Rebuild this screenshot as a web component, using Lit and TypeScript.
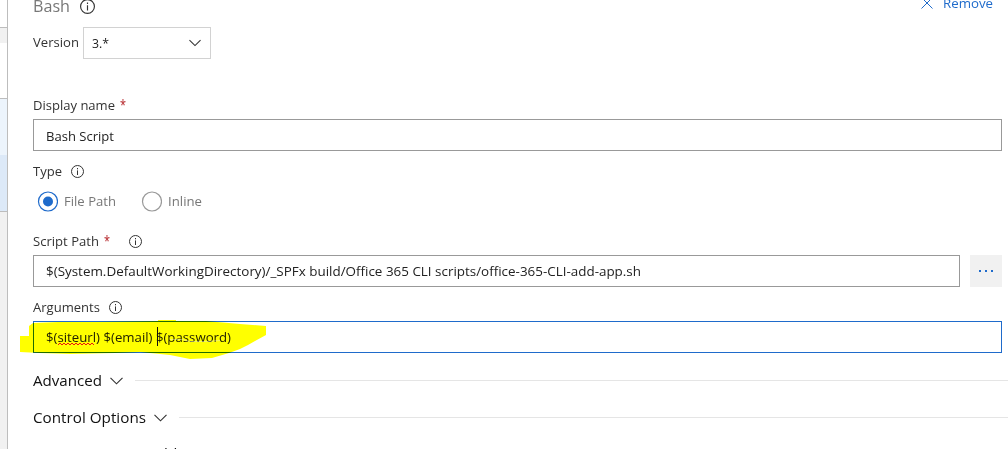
import { LitElement, html, svg, css } from "lit";
import { customElement, property } from "lit/decorators.js";

@customElement("info-icon")
class InfoIcon extends LitElement {
  @property({ type: Number }) size = 13;
  static styles = css`:host{display:block;line-height:0}`;
  render() {
    return html`<svg width=${this.size} height=${this.size} viewBox="0 0 13 13" fill="none" stroke="#333"><circle cx="6.5" cy="6.5" r="6"/><path d="M6.5 5.4V10M6.5 3V4.3"/></svg>`;
  }
}

/* A run of text fitted to a known advance width. */
@customElement("fit-text")
class FitText extends LitElement {
  @property() text = "";
  @property({ type: Number }) w = 50;
  @property({ type: Number }) size = 14;
  static styles = css`
    :host{display:block;line-height:0;flex:none}
    svg{overflow:visible;display:block}
    text{font-family:"Open Sans","Noto Sans",sans-serif;fill:currentColor}
  `;
  render() {
    return html`<svg width=${this.w} height="20">${svg`<text x="0" y="15" font-size=${this.size} textLength=${this.w} lengthAdjust="spacingAndGlyphs">${this.text}</text>`}</svg>`;
  }
}

@customElement("app-root")
class AppRoot extends LitElement {
  static styles = css`
    :host{display:flex;width:1008px;height:449px;overflow:hidden;background:#fff;color:#333;font-family:"Open Sans","Noto Sans",sans-serif;position:relative}
    *{box-sizing:border-box}
    .side{width:8px;height:449px;border-right:1px solid #bdbdbd;display:flex;flex-direction:column;flex:none;background:#f1f1f1}
    .s1{height:27px;background:#fff}
    .s2{height:16px;background:#f1f1f1;border-top:1px solid #bdbdbd}
    .s3{height:55px;background:#fff}
    .s4{height:57px;background:#ecf4fc;border-top:1px solid #bdbdbd}
    .s5{height:57px;background:#dce9f8;border-bottom:1px solid #bdbdbd}
    .main{flex:1;padding-left:25px;display:flex;flex-direction:column;min-width:0}
    .row{display:flex;align-items:center;flex:none}
    .top{height:27px;align-items:flex-start}
    .title{color:#777;margin-top:-3px}
    .top info-icon{margin:-1px 0 0 10px}
    .remove{margin:-7px 15px 0 auto;display:flex;color:#1f6bcb}
    .remove .x{margin:5px 10px 0 0}
    .version{height:32px;gap:4px}
    .version > fit-text{margin-top:-2px}
    .select{width:128px;height:32px;border:1px solid #d2d2d2;padding:0 9px 0 8px;display:flex;align-items:center;justify-content:space-between;color:#222}
    .label{height:20px}
    .dn{margin:36px 0 4px}
    .req{color:#b32025;margin-left:5px}
    .box{height:32px;border:1px solid #999;width:969px;padding-left:12px;display:flex;align-items:center;color:#222;flex:none}
    .name{padding-top:1px}
    .type{margin-top:10px}
    .type info-icon,.args info-icon{margin-left:9px}
    .radios{height:22px;margin-top:9px;padding-left:4px;color:#777}
    .radios svg{margin-right:6px;flex:none}
    .radios .second{margin-left:25px}
    .sp{margin:19px 0 4px}
    .sp info-icon{margin-left:19px}
    .path{gap:10px}
    .path .box{width:927px}
    .more{width:32px;height:32px;background:#f1f1f1;display:flex;align-items:center;justify-content:center;gap:4px}
    .more i{width:2px;height:2px;background:#1f6bcb}
    .args{margin:10px 0 4px}
    .focus{border-color:#1f6bcb}
    .section{height:37px;color:#111}
    .first{margin-top:9px}
    .last{margin-top:-1px}
    .section svg{margin-left:8px;flex:none}
    .section hr{flex:1;border:0;height:1px;background:#e5e5e5;margin:0 0 0 12px}
    .marker{position:absolute;left:0;top:305px;mix-blend-mode:multiply;pointer-events:none}
    .gap{position:absolute;left:170px;top:339px}
    .squiggle{position:absolute;left:58px;top:342px}
    .caret{position:absolute;left:157px;top:327px;width:1px;height:19px;background:#111}
  `;
  chevron(w = 13) {
    return html`<svg width=${w} height="8" viewBox="0 0 13 8" fill="none" stroke="#333" stroke-width="1.15"><path d="M.5 .8L6.5 6.8L12.5 .8"/></svg>`;
  }
  render() {
    return html`
      <div class="side"><div class="s1"></div><div class="s2"></div><div class="s3"></div><div class="s4"></div><div class="s5"></div></div>
      <div class="main">
        <div class="row top">
          <fit-text class="title" text="Bash" .w=${37} .size=${17}></fit-text>
          <info-icon .size=${15}></info-icon>
          <div class="remove"><svg class="x" width="12" height="12" fill="none" stroke="currentColor"><path d="M.5 -.5L11.5 10.5M11.5 -.5L.5 10.5"/></svg><fit-text text="Remove" .w=${50} .size=${13.5}></fit-text></div>
        </div>
        <div class="row version"><fit-text text="Version" .w=${46} .size=${13.5}></fit-text>
          <div class="select"><fit-text text="3.*" .w=${17} .size=${13.5}></fit-text>${this.chevron(12)}</div></div>
        <div class="row label dn"><fit-text text="Display name" .w=${82} .size=${13.5}></fit-text><fit-text class="req" text="*" .w=${6}></fit-text></div>
        <div class="box name"><fit-text text="Bash Script" .w=${68} .size=${13.5}></fit-text></div>
        <div class="row label type"><fit-text text="Type" .w=${29} .size=${13.5}></fit-text><info-icon></info-icon></div>
        <div class="row radios">
          <svg width="21" height="21" fill="none" stroke="#1f6bcb" stroke-width="1.2"><circle cx="11" cy="10.5" r="9.5"/><circle cx="11" cy="10.5" r="5" fill="#1f6bcb" stroke="none"/></svg><fit-text text="File Path" .w=${52} .size=${13.5}></fit-text>
          <svg class="second" width="21" height="21" fill="none" stroke="#999" stroke-width="1.2"><circle cx="11" cy="10.5" r="9.5"/></svg><fit-text text="Inline" .w=${34} .size=${13.5}></fit-text>
        </div>
        <div class="row label sp"><fit-text text="Script Path" .w=${66} .size=${13.5}></fit-text><fit-text class="req" text="*" .w=${6}></fit-text><info-icon></info-icon></div>
        <div class="row path"><div class="box"><fit-text text="$(System.DefaultWorkingDirectory)/_SPFx build/Office 365 CLI scripts/office-365-CLI-add-app.sh" .w=${595} .size=${13.5}></fit-text></div><div class="more"><i></i><i></i><i></i></div></div>
        <div class="row label args"><fit-text text="Arguments" .w=${67} .size=${13.5}></fit-text><info-icon></info-icon></div>
        <div class="box focus"><fit-text text="$(siteurl) $(email) $(password)" .w=${185} .size=${13.5}></fit-text></div>
        <div class="row section first"><fit-text text="Advanced" .w=${69} .size=${15}></fit-text>${this.chevron()}<hr></div>
        <div class="row section"><fit-text text="Control Options" .w=${113} .size=${15}></fit-text>${this.chevron()}<hr></div>
        <div class="row section last"><fit-text text="Environment Variables" .w=${160} .size=${15}></fit-text></div>
      </div>
      <svg class="marker" width="280" height="60"><path fill="#ff0" d="M20 31H29V21L33 18L58 17L95 17L158 16V15H176V16L206 16L240 19L266 21V30L255 36L248 40L240 44L229 48L212 53L190 54L170 50L140 47L115 48L70 49L40 48L20 47Z"/></svg>
      <svg class="gap" width="54" height="4" fill="none" stroke="#e6eefb" stroke-opacity=".4"><path d="M0 .5H12L20 2.5H36L50 1.5"/></svg>
      <svg class="squiggle" width="38" height="4" fill="none" stroke="#e11"><path d="M0 3l2-2 2 2 2-2 2 2 2-2 2 2 2-2 2 2 2-2 2 2 2-2 2 2 2-2 2 2 2-2 2 2 2-2 2 2"/></svg>
      <span class="caret"></span>`;
  }
}
